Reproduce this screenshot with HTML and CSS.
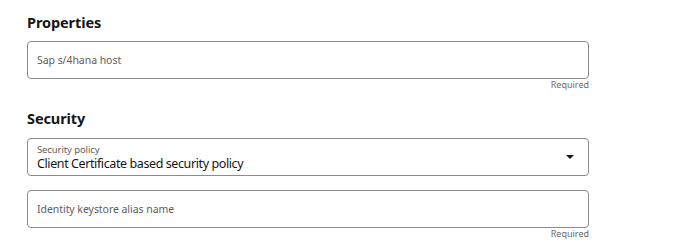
FILE: index.html
```html
<!DOCTYPE html>
<html lang="en">
<head>
    <meta charset="utf-8"/>
    <title>Connection properties</title>
    <link rel="stylesheet" href="styles.css">
</head>
<body>
<div class="form">
    <h2 class="section_title">Properties</h2>
    <div class="field">
        <div class="field_box">
            <span class="placeholder">Sap s/4hana host</span>
        </div>
        <div class="hint">Required</div>
    </div>

    <h2 class="section_title second">Security</h2>
    <div class="field">
        <div class="field_box select">
            <div class="select_text">
                <span class="label">Security policy</span>
                <span class="value">Client Certificate based security policy</span>
            </div>
            <span class="caret"></span>
        </div>
    </div>
    <div class="field spaced">
        <div class="field_box">
            <span class="placeholder">Identity keystore alias name</span>
        </div>
        <div class="hint">Required</div>
    </div>
</div>
</body>
</html>
```

FILE: styles.css
```css
*{ padding:0px; margin:0px; box-sizing:border-box; }
body{ background:#fff; font-family:"Noto Sans", "Liberation Sans", sans-serif; color:#161513; }
.form{ width:562px; margin-left:27px; padding-top:12px; }
.section_title{ font-size:14.5px; font-weight:bold; line-height:20px; height:29px; color:#161513; letter-spacing:-0.1px; }
.section_title.second{ margin-top:16px; height:30px; }
.field_box{ height:38px; border:1px solid #8c8c8c; border-radius:4px; display:flex; align-items:center; padding:0 9px; }
.placeholder{ font-size:10.5px; color:#5f5d5a; letter-spacing:-0.05px; }
.hint{ font-size:9px; color:#6b6966; text-align:right; line-height:12px; height:13px; }
.select{ justify-content:space-between; padding-right:14px; }
.select_text{ display:flex; flex-direction:column; gap:1px; }
.label{ font-size:9.5px; line-height:11px; color:#5f5d5a; letter-spacing:-0.1px; }
.value{ font-size:12.5px; line-height:15px; color:#161513; letter-spacing:-0.4px; }
.caret{ width:0; height:0; border-left:4.5px solid transparent; border-right:4.5px solid transparent; border-top:4px solid #161513; }
.spaced{ margin-top:14px; }
```
